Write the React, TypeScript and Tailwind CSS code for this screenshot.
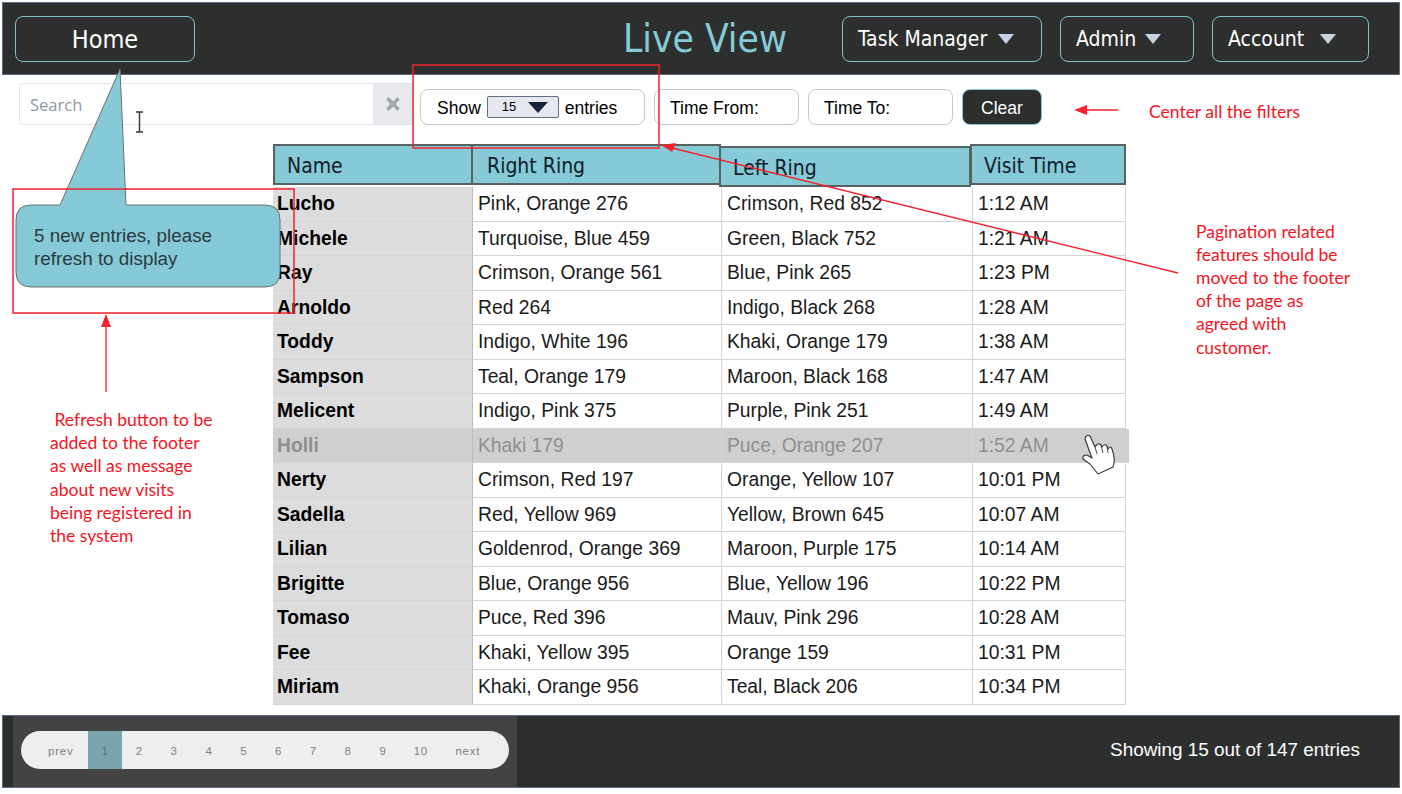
import { X } from 'lucide-react';

const rows: [string, string, string, string][] = [
  ['Lucho', 'Pink, Orange 276', 'Crimson, Red 852', '1:12 AM'],
  ['Michele', 'Turquoise, Blue 459', 'Green, Black 752', '1:21 AM'],
  ['Ray', 'Crimson, Orange 561', 'Blue, Pink 265', '1:23 PM'],
  ['Arnoldo', 'Red 264', 'Indigo, Black 268', '1:28 AM'],
  ['Toddy', 'Indigo, White 196', 'Khaki, Orange 179', '1:38 AM'],
  ['Sampson', 'Teal, Orange 179', 'Maroon, Black 168', '1:47 AM'],
  ['Melicent', 'Indigo, Pink 375', 'Purple, Pink 251', '1:49 AM'],
  ['Holli', 'Khaki 179', 'Puce, Orange 207', '1:52 AM'],
  ['Nerty', 'Crimson, Red 197', 'Orange, Yellow 107', '10:01 PM'],
  ['Sadella', 'Red, Yellow 969', 'Yellow, Brown 645', '10:07 AM'],
  ['Lilian', 'Goldenrod, Orange 369', 'Maroon, Purple 175', '10:14 AM'],
  ['Brigitte', 'Blue, Orange 956', 'Blue, Yellow 196', '10:22 PM'],
  ['Tomaso', 'Puce, Red 396', 'Mauv, Pink 296', '10:28 AM'],
  ['Fee', 'Khaki, Yellow 395', 'Orange 159', '10:31 PM'],
  ['Miriam', 'Khaki, Orange 956', 'Teal, Black 206', '10:34 PM'],
];

const pages = ['2', '3', '4', '5', '6', '7', '8', '9'];

function NavButton({ label, width, gap }: { label: string; width: string; gap: string }) {
  return (
    <button className={`flex h-[46px] items-center rounded-[8px] border border-[#7fc0cc] pl-[15px] text-[21px] text-white ${width} ${gap}`}>
      <span className="pt-[3px]">{label}</span>
      <span className="h-0 w-0 border-x-[8px] border-t-[10px] border-x-transparent border-t-[#c5d3e6]" />
    </button>
  );
}

export default function App() {
  return (
    <div className="relative flex h-[794px] w-[1402px] flex-col overflow-hidden bg-white font-['Liberation_Sans',sans-serif]">
      <header className="mx-[2px] mt-[2px] flex h-[73px] items-center border border-[#5d6b80] bg-[#2d2f2e] pl-[12px] font-['DejaVu_Sans_Condensed','DejaVu_Sans',sans-serif]">
        <button className="h-[46px] w-[180px] rounded-[8px] border border-[#7fc0cc] pt-[2px] text-[25px] text-white">Home</button>
        <h1 className="ml-[428px] w-[219px] text-[38.6px] leading-[46px] text-[#86cad7]">Live View</h1>
        <NavButton label="Task Manager" width="w-[200px]" gap="gap-[11px]" />
        <div className="w-[18px]" />
        <NavButton label="Admin" width="w-[134px]" gap="gap-[9px]" />
        <div className="w-[18px]" />
        <NavButton label="Account" width="w-[157px]" gap="gap-[16px]" />
      </header>

      <section className="flex items-start pl-[19px] pt-[8px]">
        <div className="flex h-[42px] w-[394px] overflow-hidden rounded-l-[4px] border border-[#dfe3ea]">
          <div className="flex-1 pl-[10px] pt-[9px] font-['Open_Sans',sans-serif] text-[16.5px] text-[#8d97a5]">Search</div>
          <div className="flex w-[39px] items-center justify-center bg-[#e7e9ed]">
            <X size={18} strokeWidth={5} className="text-[#a3a7ad]" />
          </div>
        </div>
        <div className="ml-[7px] mt-[6px] flex items-center gap-[9px] text-[17.5px] text-black">
          <div className="flex h-[36px] w-[225px] items-center rounded-[8px] border border-[#c8c8c8] pl-[16px]">
            <span className="pt-[2px]">Show</span>
            <span className="mx-[6px] flex h-[22px] w-[72px] items-center rounded-[2px] border border-[#5e6e86] bg-[#e6e8ee] pl-[14px] text-[13px]">
              15
              <span className="ml-[12px] h-0 w-0 border-x-[10px] border-t-[11px] border-x-transparent border-t-[#17233a]" />
            </span>
            <span className="pt-[2px]">entries</span>
          </div>
          <div className="flex h-[36px] w-[145px] items-center rounded-[8px] border border-[#c8c8c8] pl-[15px] pt-[2px]">Time From:</div>
          <div className="flex h-[36px] w-[145px] items-center rounded-[8px] border border-[#c8c8c8] pl-[15px] pt-[2px]">Time To:</div>
          <button className="h-[36px] w-[80px] rounded-[8px] border border-[#86cad7] bg-[#2d2f2e] pt-[2px] text-white">Clear</button>
        </div>
      </section>

      <main className="ml-[273px] mt-[19px] w-[853px] flex-1">
        <div className="flex h-[43px] items-start font-['DejaVu_Sans_Condensed','DejaVu_Sans',sans-serif] text-[21px] text-[#10202a]">
          <div className="flex h-[41px] w-[200px] items-center border-2 border-[#57625f] bg-[#86cad7] pl-[12px] pt-[5px]">Name</div>
          <div className="-ml-[2px] flex h-[41px] w-[250px] items-center border-2 border-[#57625f] bg-[#86cad7] pl-[14px] pt-[5px]">Right Ring</div>
          <div className="-ml-[2px] mt-[2px] flex h-[41px] w-[252px] items-center border-2 border-[#57625f] bg-[#86cad7] pl-[12px] pt-[5px]">Left Ring</div>
          <div className="-ml-[1px] flex h-[41px] w-[156px] items-center border-2 border-[#57625f] bg-[#86cad7] pl-[12px] pt-[5px]">Visit Time</div>
        </div>
        <div className="text-[19.3px] text-[#1a1a1a]">
          {rows.map((row) => {
            const hovered = row[0] === 'Holli';
            return (
              <div
                key={row[0]}
                className={`grid h-[34.5px] grid-cols-[199px_249px_251px_154px] border-b border-[#d4d4d4] ${hovered ? '-mr-[3px] bg-[#cfcfcf] text-[#8f8f8f]' : ''}`}
              >
                <div className={`flex items-center pl-[4px] pt-[2px] font-bold ${hovered ? '' : 'bg-[#dcdcdc] text-black'}`}>{row[0]}</div>
                <div className="flex items-center border-l border-[#bdbdbd] pl-[5px] pt-[2px]">{row[1]}</div>
                <div className="flex items-center border-l border-[#d4d4d4] pl-[5px] pt-[2px]">{row[2]}</div>
                <div className={`flex items-center border-x border-[#d4d4d4] pl-[5px] pt-[2px] ${hovered ? 'border-r-transparent' : ''}`}>{row[3]}</div>
              </div>
            );
          })}
        </div>
      </main>

      <footer className="mx-[2px] mb-[6px] flex h-[73px] items-center justify-between border border-[#5d6b80] bg-[#2d2f2e] pl-[10px] pr-[39px]">
        <div className="flex h-[71px] w-[504px] items-start bg-[#434343] pl-[8px] pt-[15px]">
          <div className="flex h-[38px] w-[488px] items-center overflow-hidden rounded-full bg-[#eeeeee] text-[11.5px] tracking-[0.8px] text-[#85807c]">
            <span className="w-[67px] pl-[27px] pt-[3px]">prev</span>
            <span className="flex h-full w-[34px] items-center justify-center bg-[#7aa5af] pt-[3px] text-[#5f6f75]">1</span>
            {pages.map((page) => (
              <span key={page} className="w-[34.8px] pt-[3px] text-center">{page}</span>
            ))}
            <span className="w-[38px] pl-[3px] pt-[3px] text-center">10</span>
            <span className="pl-[17px] pt-[3px]">next</span>
          </div>
        </div>
        <p className="pb-[2px] text-[18.9px] text-white">Showing 15 out of 147 entries</p>
      </footer>

      {/* markup notes drawn over the page */}
      <svg className="pointer-events-none absolute left-0 top-0" width="1402" height="794" fill="none">
        <path d="M120 69 L126 205 L265 205 Q280 205 280 220 L280 272 Q280 287 265 287 L31 287 Q16 287 16 272 L16 220 Q16 205 31 205 L60 205 Z" fill="#86cad7" stroke="#6f6f6f" />
        <rect x="413" y="65" width="246" height="83" stroke="#f5222d" strokeWidth="1.5" />
        <rect x="13" y="189" width="281" height="124" stroke="#f5222d" strokeWidth="1.5" />
        <path d="M1178 273 L672 148" stroke="#f5222d" strokeWidth="1.3" />
        <path d="M661 145 L676 143 L672 152 Z" fill="#f5222d" />
        <path d="M1118 110 L1084 110" stroke="#f5222d" strokeWidth="1.3" />
        <path d="M1074 110 L1087 105 L1087 115 Z" fill="#f5222d" />
        <path d="M106 392 L106 325" stroke="#f5222d" strokeWidth="1.3" />
        <path d="M106 314 L111 327 L101 327 Z" fill="#f5222d" />
        <path d="M136 112 H143 M139.5 112 V132 M136 132 H143" stroke="#333" strokeWidth="1.4" />
        {/* hand cursor */}
        <path
          d="M1085 439 Q1086 434 1090 436 L1095 447 Q1098 442 1101 445 L1102 447 Q1105 443 1107 446 L1108 449 Q1111 445 1112 449 Q1116 460 1113 467 L1098 474 L1090 464 L1083 459 Q1082 455 1087 455 L1092 458 Z"
          fill="#fff"
          stroke="#3c3c3c"
          strokeWidth="1.2"
          strokeLinejoin="round"
        />
        <path d="M1095 447 L1097 454 M1101 445 L1103 453 M1107 446 L1108 453" stroke="#3c3c3c" strokeWidth="0.9" />
      </svg>

      <p className="absolute left-[34px] top-[224px] w-[220px] text-[18.85px] leading-[23px] text-[#2b3a40]">5 new entries, please refresh to display</p>

      <div className="font-['Lato',sans-serif] text-[17.5px] text-[#f5141e]">
        <p className="absolute left-[1149px] top-[99px]">Center all the filters</p>
        <p className="absolute left-[1196px] top-[219.5px] w-[160px] leading-[23.2px]">
          Pagination related features should be moved to the footer of the page as agreed with customer.
        </p>
        <p className="absolute left-[50px] top-[408px] w-[167px] leading-[23.2px]">
          &nbsp;Refresh button to be added to the footer as well as message about new visits being registered in the system
        </p>
      </div>
    </div>
  );
}
